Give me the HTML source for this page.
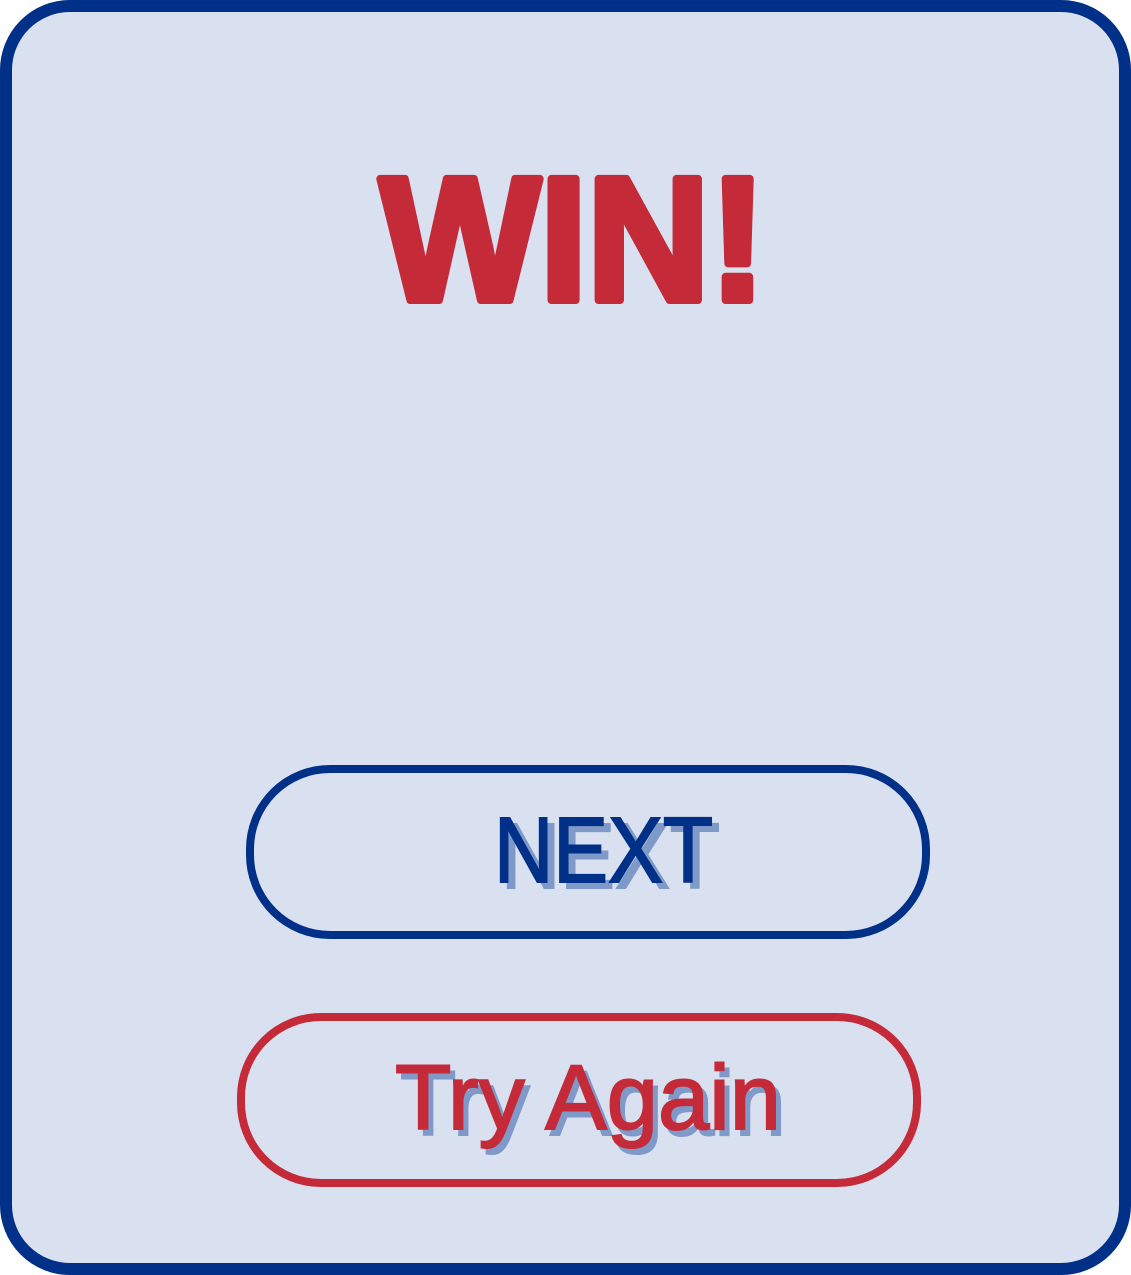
<!DOCTYPE html>
<html><head><meta charset="utf-8"><style>
html,body{margin:0;padding:0;background:#fff;width:1131px;height:1275px;overflow:hidden}
svg{display:block}
text{font-family:"Liberation Sans",sans-serif}
</style></head><body>
<svg width="1131" height="1275" viewBox="0 0 1131 1275">
<rect x="6" y="6" width="1119" height="1263" rx="64" fill="#d9e0f0" stroke="#003087" stroke-width="12"/>
<text x="380" y="300" font-size="176" font-weight="bold" fill="#c42a38" stroke="#c42a38" stroke-width="8" stroke-linejoin="round" textLength="386" lengthAdjust="spacingAndGlyphs">WIN!</text>
<rect x="250" y="769" width="676" height="166" rx="80" fill="none" stroke="#003087" stroke-width="8"/>
<text x="501" y="888" font-size="93" fill="#7f99c8" stroke="#7f99c8" stroke-width="2" textLength="219" lengthAdjust="spacingAndGlyphs">NEXT</text>
<text x="494" y="882" font-size="93" fill="#003087" stroke="#003087" stroke-width="2" textLength="219" lengthAdjust="spacingAndGlyphs">NEXT</text>
<rect x="241" y="1017" width="676" height="166" rx="80" fill="none" stroke="#c42a38" stroke-width="8"/>
<text x="400" y="1135" font-size="92" fill="#7f99c8" stroke="#7f99c8" stroke-width="2" textLength="386" lengthAdjust="spacingAndGlyphs">Try Again</text>
<text x="395" y="1129" font-size="92" fill="#c42a38" stroke="#c42a38" stroke-width="2" textLength="386" lengthAdjust="spacingAndGlyphs">Try Again</text>
</svg>
</body></html>
